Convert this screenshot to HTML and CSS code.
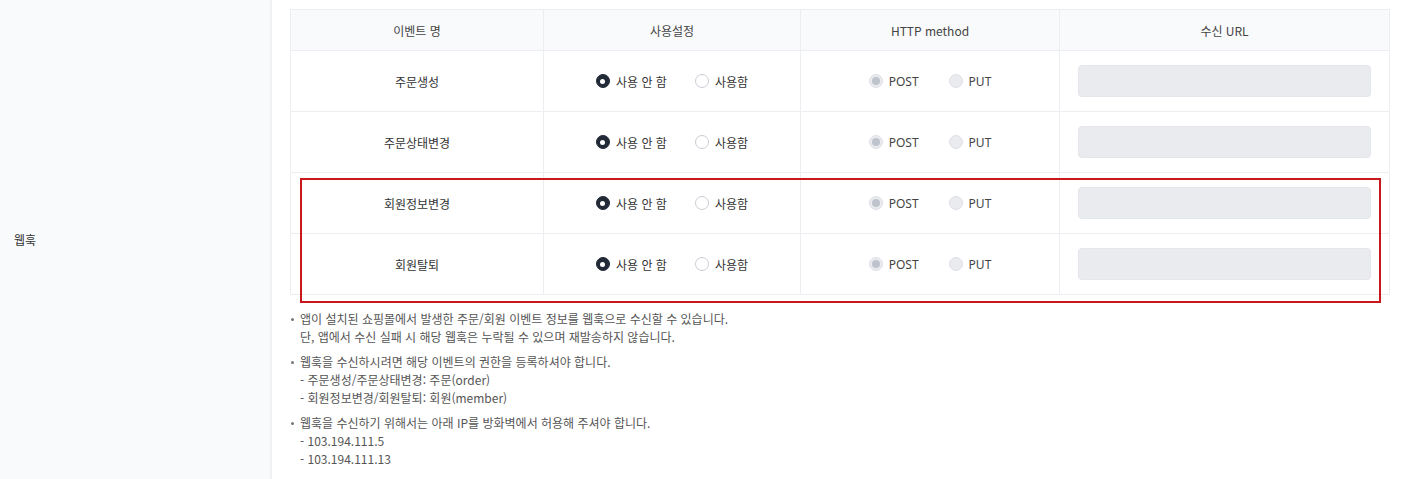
FILE: index.html
```html
<!DOCTYPE html>
<html lang="ko">
<head>
<meta charset="utf-8">
<link rel="stylesheet" href="styles.css">
</head>
<body>
<div class="row">
  <div class="label">웹훅</div>
  <div class="content">
    <div class="table-wrap">
      <table class="grid">
        <colgroup>
          <col class="c1"><col class="c2"><col class="c3"><col class="c4">
        </colgroup>
        <thead>
          <tr><th>이벤트 명</th><th>사용설정</th><th>HTTP method</th><th>수신 URL</th></tr>
        </thead>
        <tbody>
          <tr>
            <td>주문생성</td>
            <td><div class="opts"><span class="opt"><i class="radio on"></i>사용 안 함</span><span class="opt"><i class="radio"></i>사용함</span></div></td>
            <td><div class="opts method"><span class="opt"><i class="radio dis-on"></i>POST</span><span class="opt"><i class="radio dis"></i>PUT</span></div></td>
            <td><div class="input"></div></td>
          </tr>
          <tr>
            <td>주문상태변경</td>
            <td><div class="opts"><span class="opt"><i class="radio on"></i>사용 안 함</span><span class="opt"><i class="radio"></i>사용함</span></div></td>
            <td><div class="opts method"><span class="opt"><i class="radio dis-on"></i>POST</span><span class="opt"><i class="radio dis"></i>PUT</span></div></td>
            <td><div class="input"></div></td>
          </tr>
          <tr>
            <td>회원정보변경</td>
            <td><div class="opts"><span class="opt"><i class="radio on"></i>사용 안 함</span><span class="opt"><i class="radio"></i>사용함</span></div></td>
            <td><div class="opts method"><span class="opt"><i class="radio dis-on"></i>POST</span><span class="opt"><i class="radio dis"></i>PUT</span></div></td>
            <td><div class="input"></div></td>
          </tr>
          <tr>
            <td>회원탈퇴</td>
            <td><div class="opts"><span class="opt"><i class="radio on"></i>사용 안 함</span><span class="opt"><i class="radio"></i>사용함</span></div></td>
            <td><div class="opts method"><span class="opt"><i class="radio dis-on"></i>POST</span><span class="opt"><i class="radio dis"></i>PUT</span></div></td>
            <td><div class="input"></div></td>
          </tr>
        </tbody>
      </table>
      <div class="highlight"></div>
    </div>
    <ul class="notes">
      <li>앱이 설치된 쇼핑몰에서 발생한 주문/회원 이벤트 정보를 웹훅으로 수신할 수 있습니다.<br>단, 앱에서 수신 실패 시 해당 웹훅은 누락될 수 있으며 재발송하지 않습니다.</li>
      <li>웹훅을 수신하시려면 해당 이벤트의 권한을 등록하셔야 합니다.<br>- 주문생성/주문상태변경: 주문(order)<br>- 회원정보변경/회원탈퇴: 회원(member)</li>
      <li>웹훅을 수신하기 위해서는 아래 IP를 방화벽에서 허용해 주셔야 합니다.<br>- 103.194.111.5<br>- 103.194.111.13</li>
    </ul>
  </div>
</div>
</body>
</html>
```

FILE: styles.css
```css
html, body {
  margin: 0;
  padding: 0;
  background: #fff;
}
body {
  font-family: "Noto Sans CJK KR", "Noto Sans", sans-serif;
  font-size: 12px;
  color: #333;
}
.row {
  display: flex;
  min-height: 479px;
}
.label {
  width: 272px;
  flex: 0 0 272px;
  background: #f9fafc;
  border-right: 2px solid #f0f1f4;
  display: flex;
  align-items: center;
  padding-left: 14px;
  box-sizing: border-box;
  font-size: 12px;
  color: #333;
}
.content {
  flex: 1;
  padding: 9px 15px 0 18px;
}
.table-wrap {
  position: relative;
  width: 1099px;
}
.grid {
  width: 1099px;
  border-collapse: collapse;
  table-layout: fixed;
  border: 1px solid #eceef1;
}
.c1 { width: 253px; }
.c2 { width: 257px; }
.c3 { width: 259px; }
.c4 { width: 330px; }
.grid th, .grid td {
  border: 1px solid #eceef1;
  text-align: center;
  padding: 0;
  font-weight: normal;
}
.grid th {
  height: 40px;
  background: #f9fafb;
  color: #444;
}
.grid td {
  height: 60px;
  color: #333;
}
.opts {
  display: flex;
  justify-content: center;
  align-items: center;
  gap: 28px;
}
.opts.method {
  gap: 30px;
}
.opt {
  display: inline-flex;
  align-items: center;
  gap: 6px;
  white-space: nowrap;
}
.method .opt {
  color: #444;
  font-family: "Noto Sans", "Noto Sans CJK KR", sans-serif;
}
.radio {
  display: inline-block;
  width: 14px;
  height: 14px;
  border-radius: 50%;
  box-sizing: border-box;
  border: 1px solid #c9cdd4;
  background: #fff;
  position: relative;
}
.radio.on {
  background: #222a37;
  border-color: #222a37;
}
.radio.on::after {
  content: "";
  position: absolute;
  left: 50%;
  top: 50%;
  width: 5px;
  height: 5px;
  margin: -2.5px 0 0 -2.5px;
  border-radius: 50%;
  background: #fff;
}
.radio.dis, .radio.dis-on {
  background: #e9ebef;
  border-color: #dde0e5;
}
.radio.dis-on::after {
  content: "";
  position: absolute;
  left: 50%;
  top: 50%;
  width: 8px;
  height: 8px;
  margin: -4px 0 0 -4px;
  border-radius: 50%;
  background: #bfc4cc;
}
.input {
  height: 32px;
  margin: 0 18px 0 18px;
  background: #e9ebef;
  border: 1px solid #e3e6ea;
  border-radius: 4px;
  box-sizing: border-box;
}
.highlight {
  position: absolute;
  left: 10px;
  top: 169px;
  width: 1081px;
  height: 125px;
  border: 2px solid #c8171d;
  box-sizing: border-box;
  pointer-events: none;
}
.notes {
  list-style: none;
  margin: 15px 0 0 0;
  padding: 0;
  color: #555;
  font-size: 12px;
  line-height: 18px;
}
.notes li {
  position: relative;
  padding-left: 10px;
  margin-bottom: 7px;
}
.notes li::before {
  content: "";
  position: absolute;
  left: 1px;
  top: 8px;
  width: 3px;
  height: 3px;
  border-radius: 50%;
  background: #777;
}
```
